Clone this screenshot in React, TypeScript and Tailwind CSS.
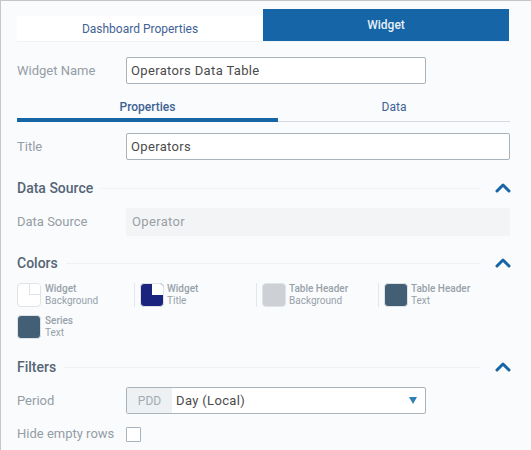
import { ChevronUp } from "lucide-react";

function SectionHeader({ title }: { title: string }) {
  return (
    <div className="flex items-center h-[20px]">
      <span className="text-[14px] font-medium text-[#566575]">{title}</span>
      <div className="flex-1 h-px bg-[#eef1f5] ml-2 mr-[10px]" />
      <ChevronUp className="w-6 h-6 -my-[2px] -mr-[4.5px] text-[#1565a7]" strokeWidth={3} />
    </div>
  );
}

function Swatch({ kind, line1, line2, divider, width }: { kind: string; line1: string; line2: string; divider?: boolean; width: string }) {
  return (
    <div className={`flex items-start ${width}`}>
      {divider && <div className="w-px h-6 bg-[#e3e6ea] mr-[5px]" />}
      {kind === "background" && (
        <div className="relative w-6 h-6 rounded-[4px] border border-[#dfe2e6] bg-white overflow-hidden">
          <div className="absolute top-[-1px] right-[-1px] w-[12px] h-[12px] border border-[#dfe2e6] bg-white" />
        </div>
      )}
      {kind === "title" && (
        <div className="relative w-6 h-6 rounded-[4px] border border-[#dfe2e6] bg-[#1a237e] overflow-hidden">
          <div className="absolute top-[-1px] right-[-1px] w-[12px] h-[12px] bg-white" />
        </div>
      )}
      {kind === "gray" && <div className="w-6 h-6 rounded-[4px] border border-[#dfe2e6] bg-[#cdd1d5]" />}
      {kind === "slate" && <div className="w-6 h-6 rounded-[4px] border border-[#dfe2e6] bg-[#435f75]" />}
      <div className={`${divider ? "ml-[3px]" : "ml-[4px]"} text-[10px] leading-[12px] text-[#98a1a9]`}>
        <div className="font-medium">{line1}</div>
        <div>{line2}</div>
      </div>
    </div>
  );
}

export default function App() {
  return (
    <div className="w-[531px] h-[450px] overflow-hidden bg-[#f9fbfd] border-t border-l border-[#c4c7ca] pl-4 pr-[21px] pt-2 font-['Roboto',sans-serif] text-[13px]">
      <div className="flex items-end h-[33px] border-b border-[#eef1f5]">
        <div className="w-[246px] h-[25px] bg-white flex items-center justify-center text-[12px] text-[#3f6294]">Dashboard Properties</div>
        <div className="w-[246px] h-[32px] bg-[#1565a7] flex items-center justify-center text-[12px] font-medium text-[#e8f0f7]">Widget</div>
      </div>

      <div className="flex items-center mt-[15px] h-[27px]">
        <label className="w-[109px] text-[#959da5]">Widget Name</label>
        <div className="w-[300px] h-[27px] flex items-center px-[4px] bg-white border border-[#a9b3bb] rounded-[2px] text-[#4b4b4b] tracking-[0.35px]">Operators Data Table</div>
      </div>

      <div className="flex mt-[8px] h-[30px] border-b border-[#d5dbe1] relative">
        <div className="w-[261px] flex justify-center pt-[6px] text-[12px] font-medium text-[#3f6294]">Properties</div>
        <div className="flex-1 flex justify-center pt-[6px] text-[12px] text-[#3f6294]">Data</div>
        <div className="absolute left-0 bottom-[-1px] w-[261px] h-[4px] bg-[#1565a7]" />
      </div>

      <div className="flex items-center mt-[11px] h-[27px]">
        <label className="w-[109px] text-[#959da5]">Title</label>
        <div className="flex-1 h-[27px] flex items-center px-[4px] bg-white border border-[#a9b3bb] rounded-[2px] text-[#4b4b4b] tracking-[0.35px]">Operators</div>
      </div>

      <div className="mt-[18px]">
        <SectionHeader title="Data Source" />
      </div>
      <div className="flex items-center mt-[10px] h-[28px]">
        <label className="w-[109px] text-[#959da5]">Data Source</label>
        <div className="flex-1 h-[28px] flex items-center px-[6px] bg-[#f3f4f6] text-[#9aa0a6] tracking-[0.35px]">Operator</div>
      </div>

      <div className="mt-[17px]">
        <SectionHeader title="Colors" />
      </div>
      <div className="flex flex-wrap mt-[10px] gap-y-[8px]">
        <Swatch kind="background" line1="Widget" line2="Background" width="w-[117px]" />
        <Swatch kind="title" line1="Widget" line2="Title" divider width="w-[122px]" />
        <Swatch kind="gray" line1="Table Header" line2="Background" divider width="w-[122px]" />
        <Swatch kind="slate" line1="Table Header" line2="Text" divider width="w-[120px]" />
        <Swatch kind="slate" line1="Series" line2="Text" width="w-[100px]" />
      </div>

      <div className="mt-[18px]">
        <SectionHeader title="Filters" />
      </div>
      <div className="flex items-center mt-[10px] h-[27px]">
        <label className="w-[109px] text-[#959da5]">Period</label>
        <div className="w-[300px] h-[27px] flex items-center bg-white border border-[#a9b3bb] rounded-[2px] overflow-hidden">
          <div className="w-[45px] h-full flex items-center justify-center bg-[#edf1f4] text-[12px] text-[#a3abb2]">PDD</div>
          <div className="flex-1 pl-[4px] text-[#4b4b4b] tracking-[0.35px]">Day (Local)</div>
          <div className="w-0 h-0 mr-[8px] border-l-[4px] border-r-[4px] border-t-[7px] border-l-transparent border-r-transparent border-t-[#2f80b8]" />
        </div>
      </div>
      <div className="flex items-center mt-[12px] h-[16px]">
        <label className="w-[109px] text-[#959da5]">Hide empty rows</label>
        <div className="w-[15px] h-[15px] bg-white border border-[#a9b3bb] rounded-[1px]" />
      </div>
    </div>
  );
}
